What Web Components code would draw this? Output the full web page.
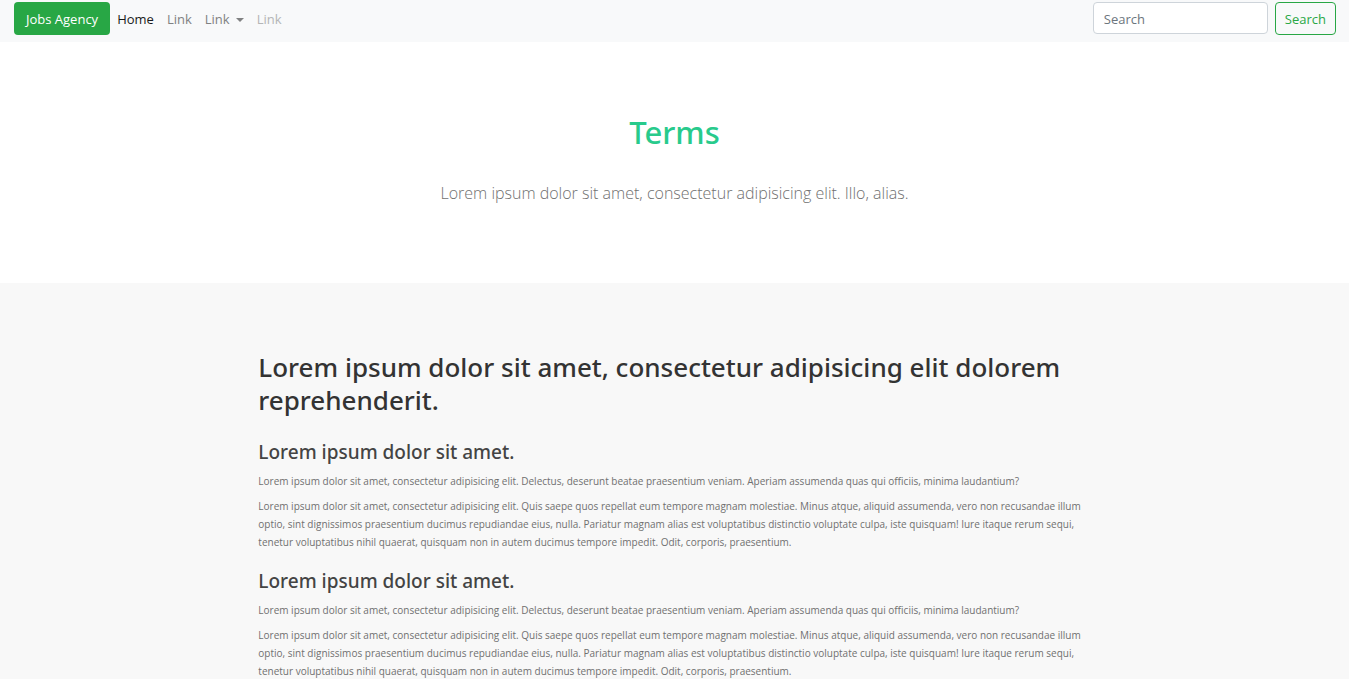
<!DOCTYPE html>
<html lang="en">
<head>
<meta charset="utf-8">
<meta name="viewport" content="width=device-width, initial-scale=1">
<title>Jobs Agency - Terms</title>
<style>
body { margin: 0; background: #f8f8f8; color: #707070; font-family: "Open Sans", "Noto Sans", sans-serif; font-size: 14px; line-height: 21px; }
</style>
</head>
<body>
<site-nav></site-nav>
<main>
<page-hero>
  <span slot="title">Terms</span>
  <span slot="lead">Lorem ipsum dolor sit amet, consectetur adipisicing elit. Illo, alias.</span>
</page-hero>
<terms-content>
  <span slot="title">Lorem ipsum dolor sit amet, consectetur adipisicing elit dolorem reprehenderit.</span>
  <terms-clause>
    <span slot="title">Lorem ipsum dolor sit amet.</span>
    <span slot="intro">Lorem ipsum dolor sit amet, consectetur adipisicing elit. Delectus, deserunt beatae praesentium veniam. Aperiam assumenda quas qui officiis, minima laudantium?</span>
    Lorem ipsum dolor sit amet, consectetur adipisicing elit. Quis saepe quos repellat eum tempore magnam molestiae. Minus atque, aliquid assumenda, vero non recusandae illum optio, sint dignissimos praesentium ducimus repudiandae eius, nulla. Pariatur magnam alias est voluptatibus distinctio voluptate culpa, iste quisquam! Iure itaque rerum sequi, tenetur voluptatibus nihil quaerat, quisquam non in autem ducimus tempore impedit. Odit, corporis, praesentium.
  </terms-clause>
  <terms-clause>
    <span slot="title">Lorem ipsum dolor sit amet.</span>
    <span slot="intro">Lorem ipsum dolor sit amet, consectetur adipisicing elit. Delectus, deserunt beatae praesentium veniam. Aperiam assumenda quas qui officiis, minima laudantium?</span>
    Lorem ipsum dolor sit amet, consectetur adipisicing elit. Quis saepe quos repellat eum tempore magnam molestiae. Minus atque, aliquid assumenda, vero non recusandae illum optio, sint dignissimos praesentium ducimus repudiandae eius, nulla. Pariatur magnam alias est voluptatibus distinctio voluptate culpa, iste quisquam! Iure itaque rerum sequi, tenetur voluptatibus nihil quaerat, quisquam non in autem ducimus tempore impedit. Odit, corporis, praesentium.
  </terms-clause>
</terms-content>
</main>
<script>
const define = (name, html) => customElements.define(name, class extends HTMLElement {
  constructor() {
    super();
    this.attachShadow({ mode: "open" }).innerHTML = html;
  }
});

define("site-nav", `
<style>
:host { display: block; background: #f8f9fa; font-size: 13px; }
nav { display: flex; align-items: flex-start; padding: 2px 13px 5px 14px; }
.brand { padding: 7px 12px 5px; border-radius: 4px; background: #28a745; color: #fff; text-decoration: none; }
ul { display: flex; margin: 0; padding: 0; list-style: none; }
li a { display: flex; align-items: center; gap: 6px; padding: 7px 6px 7px 7px; color: #808182; text-decoration: none; }
li a.active { color: #191919; }
li a.disabled { color: #b4b5b6; }
.caret { border: 4px solid transparent; border-top-color: currentColor; border-bottom: 0; }
form { display: flex; align-items: flex-start; gap: 7px; margin-left: auto; }
input, button { box-sizing: border-box; margin: 0; font: inherit; border-radius: 4px; }
input { width: 175px; height: 32px; padding: 5px 10px 4px; border: 1px solid #ced4da; background: #fff; color: #495057; }
input::placeholder { color: #6c757d; opacity: 1; }
button { padding: 6px 9px 4px; border: 1px solid #28a745; background: transparent; color: #28a745; cursor: pointer; }
</style>
<nav>
  <a class="brand" href="#">Jobs Agency</a>
  <ul>
    <li><a class="active" href="#">Home</a></li>
    <li><a href="#">Link</a></li>
    <li><a href="#">Link<span class="caret"></span></a></li>
    <li><a class="disabled" href="#" aria-disabled="true">Link</a></li>
  </ul>
  <form role="search">
    <input type="search" placeholder="Search" aria-label="Search">
    <button type="button">Search</button>
  </form>
</nav>`);

define("page-hero", `
<style>
:host { display: block; padding: 69px 14px 79px; background: #fff; text-align: center; }
h1 { margin: 0 0 29px; color: #28ca8c; font-family: "Noto Sans", sans-serif; font-size: 31px; line-height: 42px; font-weight: 500; }
p { margin: 0; font-size: 16px; line-height: 22px; font-weight: 300; }
</style>
<h1><slot name="title"></slot></h1>
<p><slot name="lead"></slot></p>`);

define("terms-content", `
<style>
:host { display: block; width: 61.7%; margin: 0 auto; padding: 68px 0; }
h2 { margin: 0 0 23px; color: #333; font-family: "Noto Sans", sans-serif; font-size: 26px; line-height: 33px; font-weight: 500; }
</style>
<h2><slot name="title"></slot></h2>
<slot></slot>`);

define("terms-clause", `
<style>
:host { display: block; margin-bottom: 18px; font-size: 10px; line-height: 18px; }
h3 { margin: 0 0 7px; color: #444; font-family: "Noto Sans", sans-serif; font-size: 19px; line-height: 25px; font-weight: 500; }
p { margin: 0 0 7px; }
</style>
<h3><slot name="title"></slot></h3>
<p><slot name="intro"></slot></p>
<p><slot></slot></p>`);
</script>
</body>
</html>
